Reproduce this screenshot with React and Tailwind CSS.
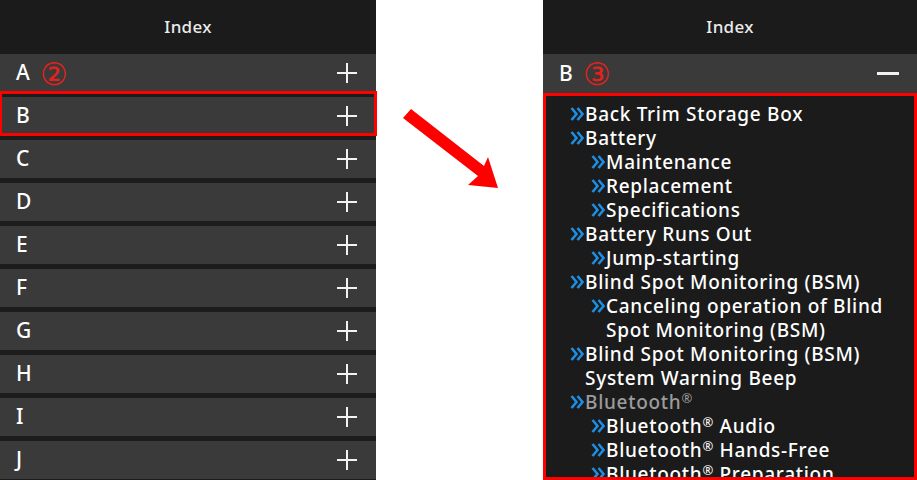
import React from "react";

const letters = ["A", "B", "C", "D", "E", "F", "G", "H", "I", "J"];

// entries shown under "B" when expanded
const entries = [
  { text: "Back Trim Storage Box", level: 1 },
  { text: "Battery", level: 1 },
  { text: "Maintenance", level: 2 },
  { text: "Replacement", level: 2 },
  { text: "Specifications", level: 2 },
  { text: "Battery Runs Out", level: 1 },
  { text: "Jump-starting", level: 2 },
  { text: "Blind Spot Monitoring (BSM)", level: 1 },
  { text: "Canceling operation of Blind Spot Monitoring (BSM)", level: 2 },
  { text: "Blind Spot Monitoring (BSM) System Warning Beep", level: 1 },
  { text: "Bluetooth", level: 1, reg: true, muted: true },
  { text: "Bluetooth", after: " Audio", level: 2, reg: true },
  { text: "Bluetooth", after: " Hands-Free", level: 2, reg: true },
  { text: "Bluetooth", after: " Preparation", level: 2, reg: true },
];

function Plus() {
  return (
    <svg width="22" height="22" viewBox="0 0 22 22" className="text-[#f2f2f2]">
      <path d="M11 1v20M1 11h20" stroke="currentColor" strokeWidth="2" />
    </svg>
  );
}

function Chevrons() {
  return (
    <svg width="15" height="24" viewBox="0 0 15 24" className="shrink-0">
      <path
        d="M1.5 6l5 6-5 6M7.5 6l5 6-5 6"
        fill="none"
        stroke="#1e8ee2"
        strokeWidth="2.6"
      />
    </svg>
  );
}

function Header() {
  return (
    <div className="h-[54px] bg-[#1b1b1b] flex items-center justify-center text-[17px] font-medium tracking-[0.3px] text-[#ececec]">
      Index
    </div>
  );
}

export default function App() {
  return (
    <div
      className="w-[917px] h-[480px] overflow-hidden bg-white flex"
      style={{ fontFamily: "'Noto Sans', 'Liberation Sans', sans-serif" }}
    >
      {/* left: collapsed index */}
      <div className="w-[376px] h-full bg-[#1c1c1c] flex flex-col">
        <Header />
        {letters.map((l, i) => (
          <div
            key={l}
            className={`${i > 0 ? "pt-[5px]" : ""} ${
              l === "B" ? "outline-3 outline-[#ff0000] -outline-offset-2 relative" : ""
            }`}
          >
            <div className="h-[38px] bg-[#3a3a3a] flex items-center pl-[16px] pr-[18px]">
              <span className="text-[21px] font-medium text-white">{l}</span>
              {l === "A" && (
                <span className="ml-[10px] text-[31px] leading-none text-[#e8201c]">②</span>
              )}
              <span className="ml-auto flex">
                <Plus />
              </span>
            </div>
          </div>
        ))}
      </div>

      {/* arrow */}
      <div className="w-[167px] h-full flex items-start">
        <svg width="167" height="220" viewBox="0 0 167 220">
          <polygon
            points="27,118 35,109 108,166 112,157 122,188 92,185 102,176"
            fill="#ff0000"
          />
        </svg>
      </div>

      {/* right: expanded B */}
      <div className="flex-1 h-full bg-[#1b1b1b] flex flex-col">
        <Header />
        <div className="h-[39px] bg-[#3a3a3a] flex items-center pl-[16px] pr-[18px]">
          <span className="text-[21px] font-medium text-white">B</span>
          <span className="ml-[10px] text-[31px] leading-none text-[#e8201c]">③</span>
          <span className="ml-auto w-[22px] h-[3px] bg-[#f2f2f2]" />
        </div>
        <div className="flex-1 border-[3px] border-[#ff0000] pt-[6px] pl-[24px] overflow-hidden">
          {entries.map((e, i) => (
            <div
              key={i}
              className={`flex text-[19px] leading-[24px] font-medium tracking-[0.7px] ${
                e.level === 2 ? "pl-[21px]" : ""
              } ${e.muted ? "text-[#9b9b9b]" : "text-white"}`}
            >
              <Chevrons />
              <span className="pr-[20px]">
                {e.text}
                {e.reg && <sup className="text-[13px] font-normal leading-none">®</sup>}
                {e.after}
              </span>
            </div>
          ))}
        </div>
      </div>
    </div>
  );
}
